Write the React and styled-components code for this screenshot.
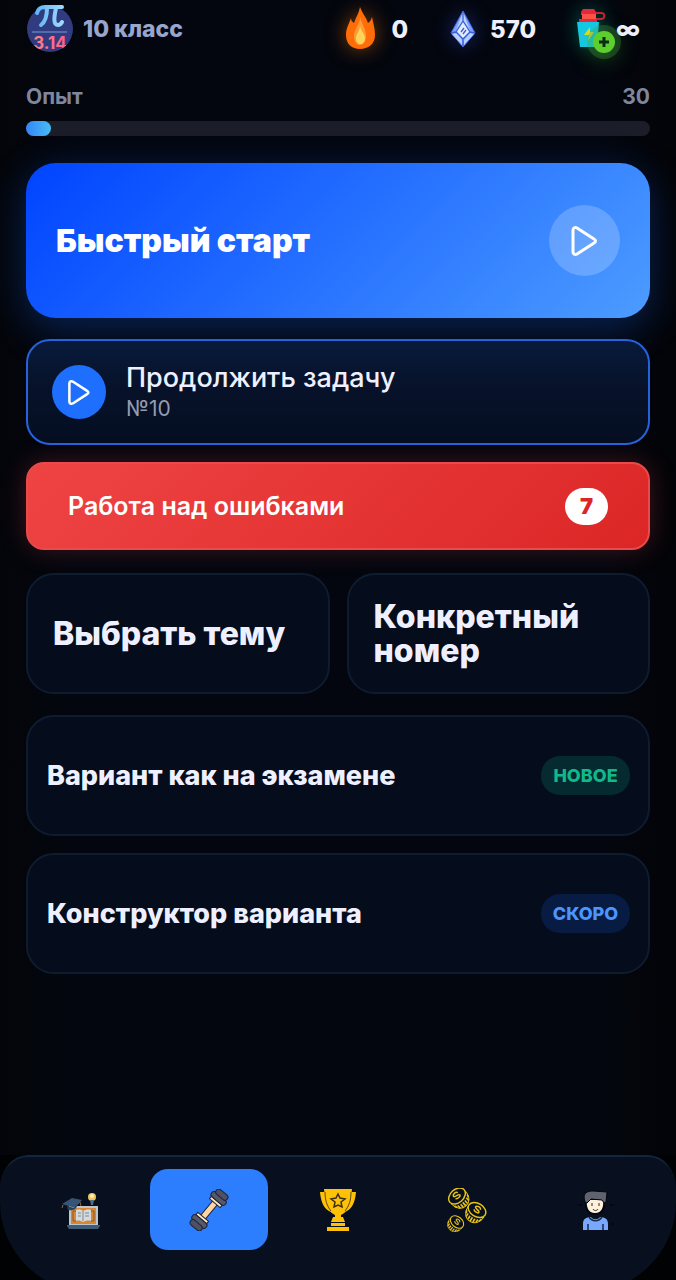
import React from 'react'
import styled, { createGlobalStyle } from 'styled-components'

const GlobalStyle = createGlobalStyle`
  * {
    box-sizing: border-box;
  }

  body {
    margin: 0;
    background: #04060d;
    color: #eef0ff;
    font-family: Inter, 'Noto Sans', sans-serif;
  }

  button {
    font: inherit;
    color: inherit;
    text-align: left;
    border: 0;
    padding: 0;
    background: none;
    cursor: pointer;
  }
`

const Page = styled.div`
  min-height: 100vh;
  display: flex;
  flex-direction: column;
  background: linear-gradient(to right, #04050a, #03060e 10%, #03060e 90%, #030407);
`

const Content = styled.main`
  flex: 1;
  padding: 4px 26px 24px;
`

const TopBar = styled.header`
  display: flex;
  align-items: center;
  justify-content: space-between;
  height: 50px;
  padding-right: 10px;
`

const Profile = styled.button`
  display: flex;
  align-items: center;
  gap: 10px;
  color: #98a5cc;
  font-size: 23px;
  font-weight: 800;

  svg {
    overflow: visible;
  }
`

const Stats = styled.div`
  display: flex;
  align-items: center;
  gap: 42px;
`

const Stat = styled.div`
  display: flex;
  align-items: center;
  gap: ${props => props.$gap}px;
  font-size: 24px;
  font-weight: 800;

  svg {
    overflow: visible;
    filter: drop-shadow(0 0 10px ${props => props.$glow});
  }
`

const EnergyButton = styled.button`
  position: relative;
  display: flex;
`

const PlusBadge = styled.span`
  position: absolute;
  right: 1px;
  bottom: -4px;
  display: flex;
  border-radius: 50%;
  background: #5fcf2c;
  box-shadow: 0 0 0 6px rgba(70, 160, 60, 0.3), 0 4px 22px rgba(80, 200, 40, 0.5);
`

const Experience = styled.section`
  padding-top: 30px;
`

const ExperienceLabels = styled.div`
  display: flex;
  justify-content: space-between;
  color: #7f879f;
  font-size: 21px;
  line-height: 26px;
  font-weight: 700;
`

const Track = styled.div`
  height: 15px;
  margin-top: 11px;
  border-radius: 8px;
  background: #1b1d29;
`

const Fill = styled.div`
  height: 100%;
  border-radius: 8px;
  background: linear-gradient(to right, #3485f8, #47bdf3);
`

const Actions = styled.div`
  display: flex;
  flex-direction: column;
  padding-top: 27px;
`

const QuickStart = styled.button`
  display: flex;
  align-items: center;
  justify-content: space-between;
  height: 155px;
  padding: 0 30px;
  border-radius: 30px;
  background: linear-gradient(135deg, #0044ff, #4c9cff);
  box-shadow: 0 10px 40px rgba(20, 100, 240, 0.32);
  color: white;
  font-size: 32px;
  font-weight: 900;
`

const PlayCircle = styled.span`
  display: flex;
  align-items: center;
  justify-content: center;
  flex: none;
  width: ${props => props.$size}px;
  height: ${props => props.$size}px;
  border-radius: 50%;
  background: ${props => props.$color};
`

const Continue = styled.button`
  display: flex;
  align-items: center;
  gap: 20px;
  height: 106px;
  margin-top: 21px;
  padding: 0 24px;
  border: 2px solid #2563dc;
  border-radius: 24px;
  background: linear-gradient(#081a3b, #07122a 45%, #050e21);
`

const ContinueText = styled.span`
  display: flex;
  flex-direction: column;
`

const ContinueTitle = styled.span`
  font-size: 27px;
  line-height: 34px;
  font-weight: 500;
`

const ContinueTask = styled.span`
  color: #949bad;
  font-size: 21px;
  line-height: 28px;
`

const Mistakes = styled.button`
  display: flex;
  align-items: center;
  justify-content: space-between;
  height: 88px;
  margin-top: 17px;
  padding: 0 40px;
  border: 2px solid #e94a4b;
  border-radius: 18px;
  background: linear-gradient(135deg, #ef4444, #dc2626) border-box;
  box-shadow: 0 0 26px rgba(239, 68, 68, 0.25);
  color: white;
  font-size: 25px;
  font-weight: 600;
`

const Count = styled.span`
  padding: 0 15px;
  border-radius: 19px;
  background: white;
  color: #dc2626;
  font-size: 22px;
  line-height: 37px;
  font-weight: 900;
`

const Topics = styled.div`
  display: grid;
  grid-template-columns: 1fr 1fr;
  gap: 17px;
  margin-top: 23px;
`

const Card = styled.button`
  display: flex;
  align-items: center;
  justify-content: space-between;
  height: 121px;
  border: 2px solid #0f1c30;
  border-radius: 28px;
  background: #050c1b;
`

const TopicCard = styled(Card)`
  padding: 0 25px;
  font-size: 32px;
  line-height: 34px;
  font-weight: 800;
`

const VariantCard = styled(Card)`
  margin-top: ${props => props.$gap}px;
  padding: 0 18px 0 19px;
  font-size: 27px;
  font-weight: 800;
`

const Tag = styled.span`
  width: 89px;
  border-radius: 19px;
  background: ${props => props.$background};
  color: ${props => props.$color};
  font-size: 18px;
  line-height: 39px;
  text-align: center;
`

const NavFrame = styled.div`
  overflow: hidden;
  background: #010204;
`

// the bottom corners run a little below the screen edge
const Nav = styled.nav`
  display: grid;
  grid-template-columns: repeat(5, 1fr);
  gap: 11px;
  height: 137px;
  margin-bottom: -12px;
  padding: 12px 21px 42px;
  border-top: 2px solid #12263f;
  border-radius: 28px 28px 90px 90px / 34px 34px 90px 90px;
  background: #080f1f;
`

const NavItem = styled.button`
  display: flex;
  align-items: center;
  justify-content: center;
  border-radius: 18px;
  background: ${props => props.$active ? '#2d7dff' : 'transparent'};
`

const AvatarNumber = styled.text`
  font-size: 17px;
  font-weight: 700;
`

const PiAvatar = () => (
  <svg width="47" height="48" viewBox="0 0 47 48" fill="none" aria-hidden="true">
    <defs>
      <clipPath id="avatar"><circle cx="24" cy="24" r="23" /></clipPath>
      <linearGradient id="pi" gradientUnits="userSpaceOnUse" x1="10" y1="0" x2="38" y2="0">
        <stop stopColor="#5fb4f4" />
        <stop offset="1" stopColor="#a2dcff" />
      </linearGradient>
      <linearGradient id="digits" x2="1">
        <stop stopColor="#ff8188" />
        <stop offset="1" stopColor="#ff5f86" />
      </linearGradient>
    </defs>
    <g clipPath="url(#avatar)">
      <rect width="47" height="48" fill="#303b80" />
      <path d="M6 27h35" stroke="#536aae" strokeWidth="2" />
      <AvatarNumber x="24" y="44" textAnchor="middle" fill="url(#digits)">3.14</AvatarNumber>
    </g>
    <path d="M11 8c1-4 4-6 8-6h17M21 3c0 8-2 14-6 17M30 3c-2 9-3 17 2 17 2 0 3-1 4-3" stroke="url(#pi)" strokeWidth="4" strokeLinecap="round" />
  </svg>
)

const FlameIcon = () => (
  <svg width="29" height="44" viewBox="0 0 29 44" aria-hidden="true">
    <path d="M14 0c-1 6-4 10-6 16-2-1-3-3-3-5-2 6-5 10-5 17 0 9 6 14 14 14s15-5 15-14c0-7-2-12-3-18-1 3-2 5-4 6C20 10 16 6 14 0Z" fill="#ff6d08" />
    <path d="M14 10c0 7-6 12-6 19 0 12 12 12 12 0 0-7-4-12-6-19Z" fill="#ff9b35" />
    <path d="M14 19c0 5-4 8-4 12 0 8 9 8 9 0 0-4-4-7-5-12Z" fill="#ffd45a" />
  </svg>
)

const CrystalIcon = () => (
  <svg width="26" height="38" viewBox="0 0 26 38" aria-hidden="true">
    <path d="M13 1 1 23l12 14 12-14Z" fill="#7ea2ff" stroke="#4566e0" />
    <path d="m13 2-7 19 7 8 7-8Z" fill="#bdd4ff" />
    <path d="m13 12-6 9 6 7 7-7Z" fill="#e2edff" />
    <path d="M2 24l5-1 5 7v5ZM24 24l-4-1-6 7v5Z" fill="#b6d0ff" />
    <path d="m13 11-7 11 7 7 7-7ZM1 23l5-1M25 23l-5-1M13 29v7M13 2v9M11 22l3-4M13 24l3-4" fill="none" stroke="#3f5ed6" strokeWidth="1.300" />
  </svg>
)

const BottleIcon = () => (
  <svg width="38" height="40" viewBox="0 0 38 40" fill="none" aria-hidden="true">
    <path d="M16 4h7c5 0 4 6 0 6h-6" stroke="#c92234" strokeWidth="2" />
    <path d="M5 0h11l2 3v3H3V3Z" fill="#e5283b" />
    <path d="M4 5h14v6H4Z" fill="#ff5248" />
    <path d="M1 10h18v3H1Z" fill="#e5283b" />
    <path d="M-1 13h22l-2 25H2Z" fill="#15c8e6" />
    <path d="m12 18-6 8h5l-1 6 6-9h-4Z" fill="#d7df30" />
  </svg>
)

const PlusIcon = () => (
  <svg width="22" height="22" viewBox="0 0 22 22" aria-hidden="true">
    <path d="M11 6v10M6 11h10" stroke="#0d2c12" strokeWidth="3" />
  </svg>
)

const PlayIcon = ({ size }) => (
  <svg width={size} height={size} viewBox="0 0 32 32" fill="none" stroke="white" strokeWidth="3" strokeLinejoin="round" aria-hidden="true">
    <path d="M4 5v22c0 2 2 3 4 2l17-11c2-1 2-3 0-4L8 3C6 2 4 3 4 5Z" />
  </svg>
)

const LearnIcon = () => (
  <svg width="42" height="42" viewBox="0 0 42 42" aria-hidden="true">
    <path d="M10 17h29v20H10Z" fill="#bcc6cb" />
    <path d="M12 19h25v16H12Z" fill="#d78732" />
    <path d="M17 22h-3v10h3M32 22h3v10h-3" stroke="#8a5a35" fill="none" />
    <path d="M17 21c3-1 6 0 7 1 2-1 5-2 8-1v11c-3-1-6 0-8 1-2-1-4-2-7-1Z" fill="#d4dade" />
    <path d="M24 22v10M19 24h3M19 27h3M26 24h4M26 27h4" stroke="#7d8790" />
    <path d="M8 36h33v1l-2 3H10l-2-3Z" fill="#415b79" />
    <path d="m3 15 10-6 10 2-7 8Z" fill="#365576" />
    <path d="m8 17 1 4c4 1 8 0 9-4v-2l-3 4Z" fill="#29435f" />
    <path d="m4 16-1 3M21 13l1 4" stroke="#8a6a41" />
    <circle cx="33" cy="8" r="4" fill="#efc262" />
    <path d="M31 11h4l-1 5h-2Z" fill="#4c718c" />
    <circle cx="33" cy="7" r="2" fill="#fff0ad" />
  </svg>
)

const DumbbellIcon = () => (
  <svg width="42" height="42" viewBox="0 0 42 42" aria-hidden="true">
    <g transform="rotate(-50 21 21)" stroke="#1c2138" strokeLinejoin="round">
      <path d="M8 18h26v6H8Z" fill="#ffd6a2" />
      <path d="M9 14h3v14H9ZM30 14h3v14h-3Z" fill="#ffe6bf" />
      <rect x="3" y="12" width="6" height="18" rx="3" fill="#555969" />
      <rect x="-2" y="14" width="6" height="14" rx="3" fill="#4c5164" />
      <rect x="33" y="12" width="6" height="18" rx="3" fill="#555969" />
      <rect x="38" y="14" width="6" height="14" rx="3" fill="#4c5164" />
    </g>
  </svg>
)

const TrophyIcon = () => (
  <svg width="38" height="42" viewBox="0 0 38 42" aria-hidden="true">
    <path d="M1 3h5l1 10c1 4 3 7 5 10C5 20 2 14 1 3ZM37 3h-5l-1 10c-1 4-3 7-5 10 7-3 10-9 11-20Z" fill="#ffc107" />
    <path d="M5 0h28l-1 9c-1 9-5 15-10 17h-6C11 24 7 18 6 9Z" fill="#ffc107" />
    <path d="M6 3c0 8 2 14 6 19M32 3c0 8-2 14-6 19" fill="none" stroke="#5b4a14" />
    <path d="M16 26h6v2h-6ZM14 28h10l2 5H12ZM12 34h14v3H12ZM8 38h22v4H8Z" fill="#ffc107" />
    <path d="m19 5 2 4 5 1-4 3 1 5-4-2-4 2 1-5-4-3 5-1Z" fill="none" stroke="#3a3013" strokeWidth="1.500" />
  </svg>
)

const Coin = ({ x, y, scale, angle }) => (
  <g transform={`translate(${x} ${y}) rotate(${angle}) scale(${scale})`} fill="none" stroke="#e8c51b">
    <ellipse rx="10" ry="7" strokeWidth="1.500" />
    <path d="M-9 6-8 9M-6 8v4M-3 9v4M0 9v5M3 9v4M6 8v4M9 6 8 9" strokeWidth="1.700" />
    <path d="M-10 2c0 6 3 12 10 12s10-6 10-12" strokeWidth="1" />
    <path d="M3-2c-1-3-6-2-6 0s6 1 6 3-5 2-6 0" strokeWidth="1.500" />
  </g>
)

const CoinsIcon = () => (
  <svg width="40" height="44" viewBox="0 0 40 44" aria-hidden="true">
    <Coin x={10} y={8} scale={0.95} angle={-42} />
    <Coin x={30} y={22} scale={0.95} angle={32} />
    <Coin x={10} y={34} scale={0.75} angle={40} />
  </svg>
)

const StudentIcon = () => (
  <svg width="38" height="42" viewBox="0 0 38 42" aria-hidden="true">
    <path d="M9 10c-1 8 1 15 9 15s10-7 9-15Z" fill="#fff0dc" stroke="#03060e" strokeWidth="2" />
    <path d="M8 13C5 4 10 2 16 2l14 1-1 10-2 1-2-3-11-1-4 4Z" fill="#60636f" stroke="#03060e" />
    <path d="M15 14v3M22 14v3M16 20c1 2 4 2 5 0" fill="none" stroke="#222431" />
    <path d="M6 41v-6c0-5 3-7 8-7 2 3 7 3 9 0 5 0 8 2 8 7v6Z" fill="#7aa8ff" />
    <path d="M12 28c3 5 10 5 13 0M11 35v6M26 35v6" fill="none" stroke="#152a4c" strokeWidth="1.500" />
    <path d="M2 16h3M33 16h3M1 35h2M35 35h2" stroke="#03060e" strokeWidth="2" />
  </svg>
)

const navItems = [
  { name: 'Обучение', icon: LearnIcon },
  { name: 'Тренировка', icon: DumbbellIcon, active: true },
  { name: 'Рейтинг', icon: TrophyIcon },
  { name: 'Монеты', icon: CoinsIcon },
  { name: 'Профиль', icon: StudentIcon },
]

const experience = { points: 30, percent: 4 }

export default class App extends React.Component {

  render() {
    return (
      <Page>
        <GlobalStyle />
        <Content>
          <TopBar>
            <Profile><PiAvatar />10 класс</Profile>
            <Stats>
              <Stat $gap={16} $glow="rgba(255, 120, 0, 0.5)"><FlameIcon />0</Stat>
              <Stat $gap={14} $glow="rgba(60, 90, 255, 0.4)"><CrystalIcon />570</Stat>
              <Stat $gap={0} $glow="rgba(0, 200, 160, 0.4)">
                <EnergyButton aria-label="Пополнить энергию">
                  <BottleIcon />
                  <PlusBadge><PlusIcon /></PlusBadge>
                </EnergyButton>
                ∞
              </Stat>
            </Stats>
          </TopBar>
          <Experience>
            <ExperienceLabels>
              <span>Опыт</span>
              <span>{experience.points}</span>
            </ExperienceLabels>
            <Track>
              <Fill style={{ width: `${experience.percent}%` }} />
            </Track>
          </Experience>
          <Actions>
            <QuickStart>
              Быстрый старт
              <PlayCircle $size={71} $color="rgba(255, 255, 255, 0.2)"><PlayIcon size={32} /></PlayCircle>
            </QuickStart>
            <Continue>
              <PlayCircle $size={54} $color="#1f6fff"><PlayIcon size={27} /></PlayCircle>
              <ContinueText>
                <ContinueTitle>Продолжить задачу</ContinueTitle>
                <ContinueTask>№10</ContinueTask>
              </ContinueText>
            </Continue>
            <Mistakes>
              Работа над ошибками
              <Count>7</Count>
            </Mistakes>
            <Topics>
              <TopicCard>Выбрать тему</TopicCard>
              <TopicCard>Конкретный номер</TopicCard>
            </Topics>
            <VariantCard $gap={21}>
              Вариант как на экзамене
              <Tag $color="#10b98a" $background="#052a30">НОВОЕ</Tag>
            </VariantCard>
            <VariantCard $gap={17}>
              Конструктор варианта
              <Tag $color="#4b95ff" $background="#081b42">СКОРО</Tag>
            </VariantCard>
          </Actions>
        </Content>
        <NavFrame>
          <Nav>
            {navItems.map(({ name, icon: Icon, active }) => (
              <NavItem key={name} aria-label={name} $active={active}><Icon /></NavItem>
            ))}
          </Nav>
        </NavFrame>
      </Page>
    )
  }

}
